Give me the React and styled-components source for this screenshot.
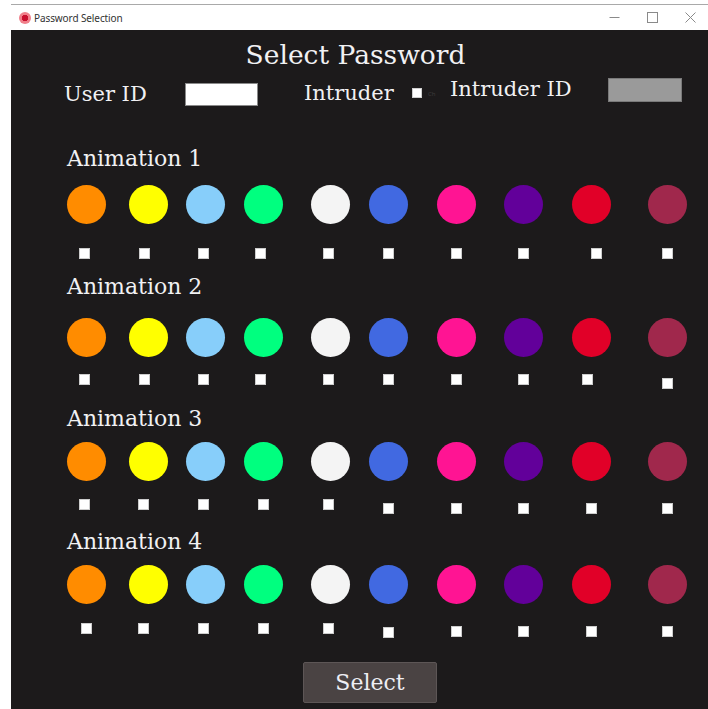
import React from 'react';
import styled, { createGlobalStyle } from 'styled-components';

const GlobalStyle = createGlobalStyle`
  html, body {
    margin: 0;
    padding: 0;
    background: #ffffff;
  }
  body {
    font-family: "DejaVu Serif", serif;
  }
`;

const Desktop = styled.div`
  width: 708px;
  height: 709px;
  overflow: hidden;
  background: #ffffff;
  padding: 4px 0 0 11px;
  box-sizing: border-box;
`;

const Window = styled.div`
  width: 697px;
  height: 705px;
  display: flex;
  flex-direction: column;
  border-top: 1px solid #a9a9a9;
  box-sizing: border-box;
`;

const TitleBar = styled.div`
  height: 25px;
  flex: none;
  display: flex;
  align-items: center;
  background: #ffffff;
  padding-left: 8px;
  font-family: "Noto Sans", "Open Sans", sans-serif;
  font-size: 10px;
  color: #333333;
`;

const AppIcon = styled.span`
  width: 12px;
  height: 12px;
  border-radius: 50%;
  background: radial-gradient(circle, #c8102e 0 3px, #f07f8a 3.5px 6px);
  margin-right: 3px;
  flex: none;
`;

const Caption = styled.span`
  flex: 1;
  letter-spacing: -0.1px;
`;

const Controls = styled.div`
  display: flex;
  align-items: center;
  height: 100%;
  color: #8a8a8a;
`;

const ControlButton = styled.span`
  width: ${(p) => p.$w}px;
  height: 100%;
  display: flex;
  align-items: center;
  justify-content: center;
`;

const Body = styled.div`
  flex: 1;
  background: #1c1a1b;
  color: #f1f1f3;
  display: flex;
  flex-direction: column;
  padding-top: 12px;
`;

const Heading = styled.h1`
  margin: 0;
  font-weight: normal;
  font-size: 26.5px;
  line-height: 26px;
  text-align: center;
  padding-right: 8px;
`;

const HeaderRow = styled.div`
  display: flex;
  align-items: flex-start;
  margin-top: 10px;
  padding-left: 53px;
  height: 28px;
`;

const FieldLabel = styled.span`
  width: ${(p) => p.$w}px;
  margin-left: ${(p) => p.$ml || 0}px;
  margin-top: ${(p) => p.$mt || 0}px;
  font-size: 21px;
  line-height: 21px;
  white-space: nowrap;
  flex: none;
`;

const TextBox = styled.span`
  width: ${(p) => p.$w}px;
  height: ${(p) => p.$h}px;
  margin-top: ${(p) => p.$mt || 0}px;
  background: ${(p) => p.$bg};
  box-shadow: inset 0 0 0 1px ${(p) => p.$edge};
  flex: none;
`;

const Tick = styled.span`
  width: 10px;
  height: 10px;
  margin-top: 10px;
  background: #ffffff;
  box-shadow: inset 0 0 0 1px #cfcfcf;
  flex: none;
`;

const TickHint = styled.span`
  width: 16px;
  margin-left: 6px;
  margin-top: 13px;
  font-family: "Noto Sans", sans-serif;
  font-size: 6px;
  line-height: 6px;
  color: #3c3a3b;
  flex: none;
`;

const Section = styled.section`
  display: flex;
  flex-direction: column;
  margin-top: ${(p) => p.$mt}px;
`;

const SectionLabel = styled.h2`
  margin: 0 0 0 56px;
  font-weight: normal;
  font-size: 22px;
  line-height: 22px;
`;

const SlotRow = styled.div`
  display: flex;
  align-items: flex-start;
  padding-left: 56px;
  margin-top: ${(p) => p.$mt}px;
`;

const Slot = styled.div`
  width: 39px;
  margin-left: ${(p) => p.$ml}px;
  display: flex;
  flex-direction: column;
  align-items: flex-start;
  flex: none;
`;

const Dot = styled.span`
  width: 39px;
  height: 39px;
  border-radius: 50%;
  background: ${(p) => p.$color};
`;

const Box = styled.span`
  width: 11px;
  height: 11px;
  margin-top: ${(p) => p.$mt}px;
  margin-left: ${(p) => 14 + p.$dx}px;
  background: #ffffff;
  box-shadow: inset 0 0 0 1px #cccccc;
`;

const Footer = styled.div`
  display: flex;
  justify-content: center;
  margin-top: auto;
  padding: 0 0 6px 21px;
`;

const SelectButton = styled.button`
  width: 134px;
  height: 41px;
  background: #4a4343;
  border: 1px solid #5d5656;
  border-radius: 2px;
  color: #eeeef4;
  font-family: "DejaVu Serif", serif;
  font-size: 22px;
  padding: 0;
`;

const COLORS = [
  '#ff8c00',
  '#ffff00',
  '#87cefa',
  '#00ff7f',
  '#f4f4f4',
  '#4169e1',
  '#ff1493',
  '#62009a',
  '#e10028',
  '#a0284c',
];

const GAPS = [0, 23, 18, 19, 28, 19, 29, 28, 29, 37];

const ANIMATIONS = [
  {
    name: 'Animation 1',
    top: 42,
    dotsTop: 15,
    dx: [-2, -4, -2, -3, -2, 0, 0, 0, 5, 0],
    dy: [24, 24, 24, 24, 24, 24, 24, 24, 24, 24],
  },
  {
    name: 'Animation 2',
    top: 17,
    dotsTop: 20,
    dx: [-2, -4, -2, -3, -2, 0, 0, 0, -4, 0],
    dy: [17, 17, 17, 17, 17, 17, 17, 17, 17, 21],
  },
  {
    name: 'Animation 3',
    top: 19,
    dotsTop: 12,
    dx: [-2, -5, -2, 0, -2, 0, 0, 0, 0, 0],
    dy: [18, 18, 18, 18, 18, 22, 22, 22, 22, 22],
  },
  {
    name: 'Animation 4',
    top: 17,
    dotsTop: 12,
    dx: [0, -5, -2, 0, -2, 0, 0, 0, 0, 0],
    dy: [19, 19, 19, 19, 19, 23, 22, 22, 22, 22],
  },
];

function WindowControls() {
  return (
    <Controls>
      <ControlButton $w={36}>
        <svg width="11" height="11" viewBox="0 0 11 11">
          <path d="M0.5 5.5h10" stroke="currentColor" strokeWidth="1" />
        </svg>
      </ControlButton>
      <ControlButton $w={40}>
        <svg width="11" height="11" viewBox="0 0 11 11">
          <rect x="0.5" y="0.5" width="10" height="10" fill="none" stroke="currentColor" />
        </svg>
      </ControlButton>
      <ControlButton $w={36}>
        <svg width="11" height="11" viewBox="0 0 11 11">
          <path d="M0.5 0.5l10 10M10.5 0.5l-10 10" stroke="currentColor" strokeWidth="1" />
        </svg>
      </ControlButton>
    </Controls>
  );
}

function AnimationPicker({ anim }) {
  return (
    <Section $mt={anim.top}>
      <SectionLabel>{anim.name}</SectionLabel>
      <SlotRow $mt={anim.dotsTop}>
        {COLORS.map((color, i) => (
          <Slot key={color} $ml={GAPS[i]}>
            <Dot $color={color} />
            <Box $dx={anim.dx[i]} $mt={anim.dy[i]} />
          </Slot>
        ))}
      </SlotRow>
    </Section>
  );
}

export default function App() {
  return (
    <>
      <GlobalStyle />
      <Desktop>
        <Window>
          <TitleBar>
            <AppIcon />
            <Caption>Password Selection</Caption>
            <WindowControls />
          </TitleBar>
          <Body>
            <Heading>Select Password</Heading>
            <HeaderRow>
              <FieldLabel $w={121} $mt={6}>User ID</FieldLabel>
              <TextBox $w={73} $h={23} $mt={5} $bg="#ffffff" $edge="#8a8a8a" />
              <FieldLabel $w={108} $ml={46} $mt={5}>Intruder</FieldLabel>
              <Tick />
              <TickHint>Ch</TickHint>
              <FieldLabel $w={158} $ml={6} $mt={1}>Intruder ID</FieldLabel>
              <TextBox $w={74} $h={24} $bg="#9a9a9a" $edge="#7a7a7a" />
            </HeaderRow>
            {ANIMATIONS.map((anim) => (
              <AnimationPicker key={anim.name} anim={anim} />
            ))}
            <Footer>
              <SelectButton>Select</SelectButton>
            </Footer>
          </Body>
        </Window>
      </Desktop>
    </>
  );
}
